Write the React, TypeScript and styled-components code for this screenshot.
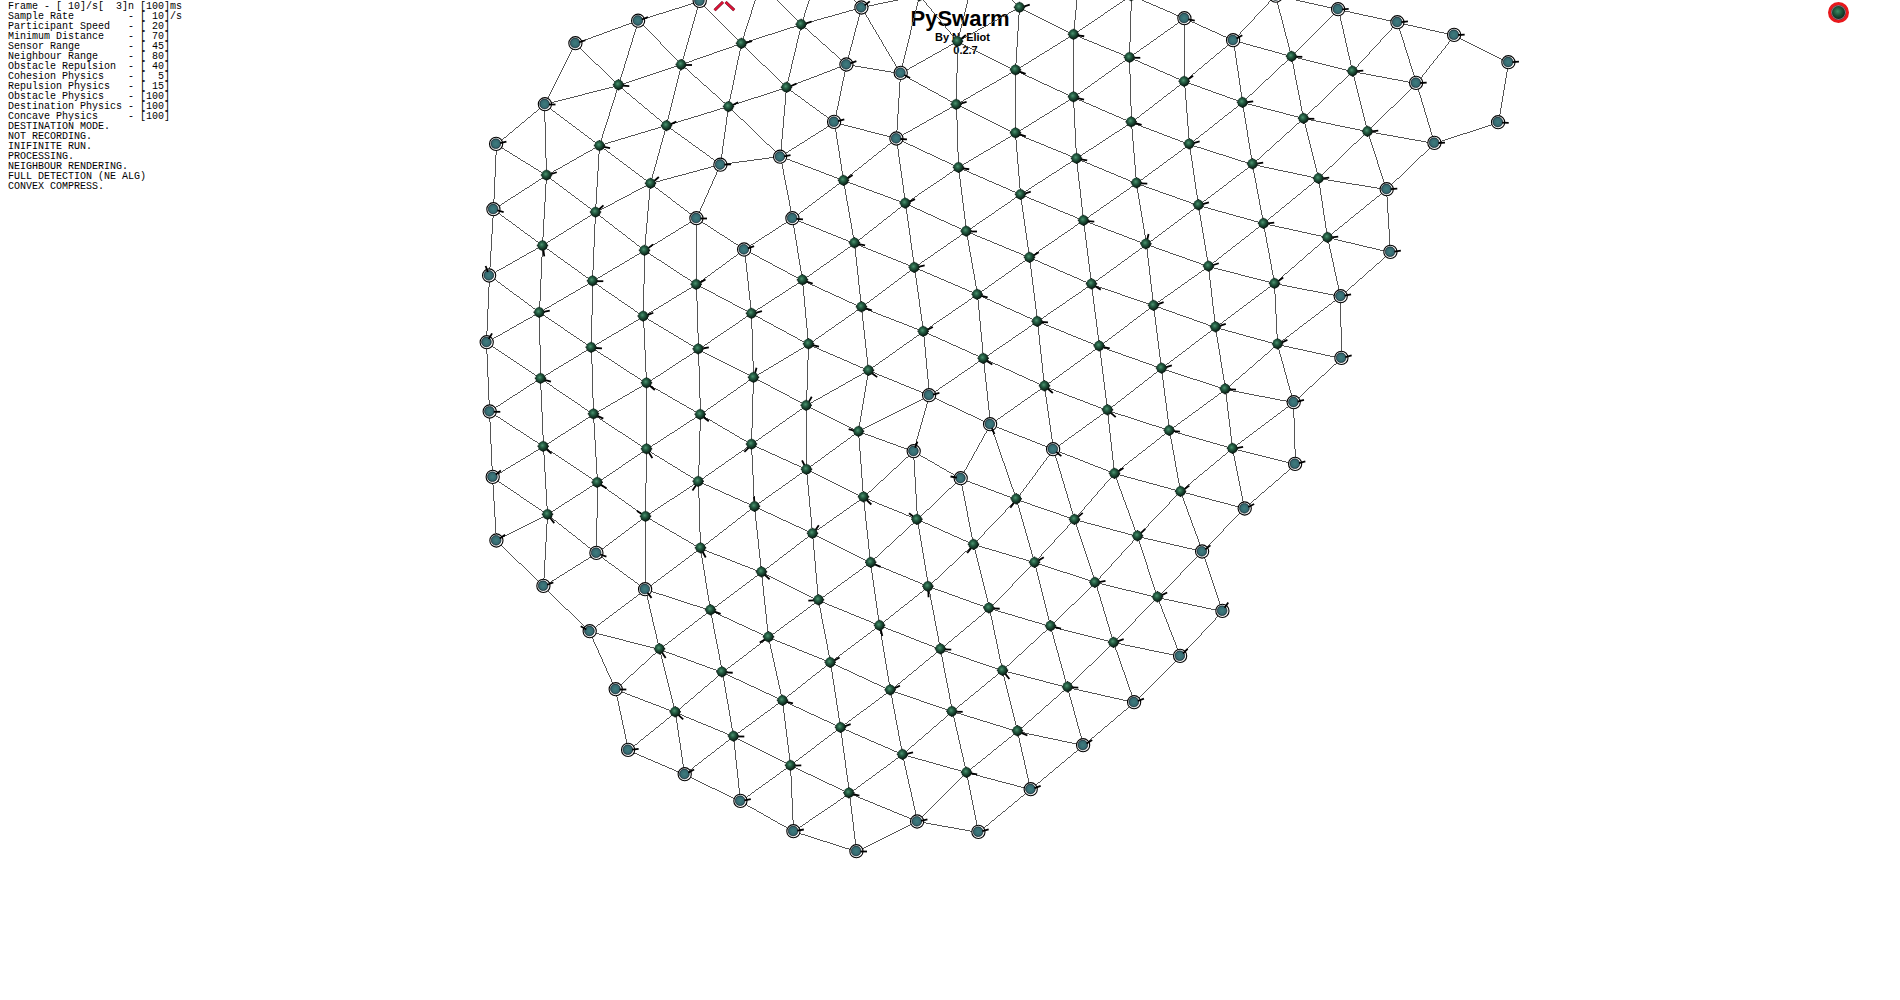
import React from "react";
import styled, { createGlobalStyle } from "styled-components";

const GlobalStyle = createGlobalStyle`
  body {
    margin: 0;
    background: #fff;
    overflow: hidden;
  }
`;

const Stage = styled.main`
  position: relative;
  display: grid;
  grid-template-columns: 1fr auto 1fr;
  align-items: start;
  width: 1900px;
  height: 1000px;
  overflow: hidden;
  background: #fff;
  color: #000;
`;

const Readout = styled.section`
  display: flex;
  flex-direction: column;
  padding: 2px 0 0 8px;
`;

const ReadoutLine = styled.div`
  height: 10px;
  font: 10px/10px "Liberation Mono", monospace;
  white-space: pre;
`;

const Heading = styled.header`
  display: flex;
  flex-direction: column;
  align-items: center;
  padding: 6px 0 0 20px;
  font-family: "Liberation Sans", Arial, sans-serif;
`;

const Title = styled.h1`
  margin: 0;
  font-size: 22px;
  line-height: 25px;
  font-weight: 700;
`;

const Author = styled.div`
  height: 13px;
  padding-left: 5px;
  font-size: 11px;
  line-height: 13px;
  font-weight: 700;
`;

const Version = styled.div`
  padding-left: 11px;
  font-size: 11px;
  line-height: 13px;
  font-weight: 700;
`;

const StatusCorner = styled.div`
  display: flex;
  justify-content: flex-end;
  padding: 2px 51px 0 0;
`;

const RunLamp = styled.div`
  box-sizing: border-box;
  width: 21px;
  height: 21px;
  border: 3px solid #e8181c;
  border-radius: 50%;
  background: radial-gradient(circle at 45% 42%, #3c8a64 0, #1d5238 35%, #06140d 80%);
  box-shadow: inset 0 0 0 1px #8a7480;
`;

const SwarmCanvas = styled.svg`
  position: absolute;
  inset: 0;
  display: block;
`;

const readout = [
  "Frame - [ 10]/s[  3]n [100]ms",
  "Sample Rate         - [ 10]/s",
  "Participant Speed   - [ 20]",
  "Minimum Distance    - [ 70]",
  "Sensor Range        - [ 45]",
  "Neighbour Range     - [ 80]",
  "Obstacle Repulsion  - [ 40]",
  "Cohesion Physics    - [  5]",
  "Repulsion Physics   - [ 15]",
  "Obstacle Physics    - [100]",
  "Destination Physics - [100]",
  "Concave Physics     - [100]",
  "DESTINATION MODE.",
  "NOT RECORDING.",
  "INIFINITE RUN.",
  "PROCESSING.",
  "NEIGHBOUR RENDERING.",
  "FULL DETECTION (NE ALG)",
  "CONVEX COMPRESS.",
];

type Agent = [x: number, y: number, heading: number];

const perimeter: Agent[] = [
  [699.3, 0.7, -150], [637.7, 20.5, -22], [575, 43, -18], [544.5, 104, 0], [495.7, 143.7, -14],
  [720, 164.5, -4], [493, 209, 14], [696, 218, 0], [743.7, 249.3, -20], [861, 7.3, -38],
  [846, 64.3, -20], [900.3, 72.7, 27], [833.7, 121.7, -16], [896, 138.3, 3], [779.7, 156.5, -10],
  [792, 218, 5], [1184, 18, 12], [1232.7, 40, -30], [1275.4, -4.5, 0], [1337.7, 9, -3],
  [1397, 22, -6], [1453.7, 34.7, -3], [1508, 62, -5], [1415.7, 82.7, -3], [1497.7, 122, 2],
  [1434, 142.7, -3], [1386.3, 189, -5], [1390, 251.7, -9], [488.7, 275.3, -110], [486.3, 342, -60],
  [489.3, 411.3, 0], [492.3, 476.7, -40], [496, 540.3, -35], [596, 552.7, 19], [928.7, 395, -14],
  [989.7, 424, 66], [913.3, 451, -70], [1052.7, 449, 39], [960.3, 478, -169], [1340.3, 296, -12],
  [1341, 357.7, -15], [1293.3, 402, -14], [1294.7, 463.7, -15], [1244.3, 508.3, -27], [1201.7, 551.3, -38],
  [543, 585.7, -21], [644.7, 589, 53], [589.3, 631, -150], [615.3, 689, 0], [627.7, 749.7, -7],
  [684.3, 774, -28], [740, 800.7, -11], [793, 831, -11], [856, 851, 0], [1222, 610.7, -57],
  [1179.7, 655.7, -45], [1133.7, 702, -22], [1082.7, 745, -31], [1030.3, 789, -20], [916.7, 821.3, -13],
  [978, 831.7, -15],
];

const interior: Agent[] = [
  [760.2, -16.5, 0], [820, -36, 0], [919.3, -4.5, 0], [976.5, -35, 0], [1081, -44, 0], [1131, -4.5, 0],
  [681, 64.5, 0], [741.3, 43.3, -15], [618.3, 84.7, 5], [728.3, 106.5, -27], [666.3, 125.5, -25],
  [599.3, 145.5, 12], [546.3, 175, -18], [650.3, 183.3, -40], [595.3, 212, -43], [542.3, 245.5, 82],
  [644.3, 250.3, -38], [801, 24.3, -17], [957.3, 41.3, -40], [786.3, 87.3, -23], [956, 104.3, -16],
  [958.3, 167.3, 8], [843.3, 180.3, -33], [905, 203, -25], [854.3, 242.7, 12], [966, 231, 0],
  [1019.3, 7.3, -18], [1073.3, 34.3, 8], [1129.3, 57.3, 0], [1015.3, 69.7, 20], [1073.3, 96.7, 13],
  [1184, 81.3, -35], [1242.3, 102.3, -8], [1015.3, 132.7, 17], [1131, 121.7, 15], [1076.3, 158.3, 9],
  [1189, 143.7, -15], [1252.3, 163.7, -9], [1020.3, 194.3, -18], [1136.3, 182.7, 2], [1083.3, 220.3, 4],
  [1198.3, 204.7, -15], [1145.7, 243.7, -77], [1263.3, 223.3, -7], [1029.3, 257.3, -32], [1291.3, 56.3, 0],
  [1352.3, 71, -5], [1303.3, 118.3, 0], [1367.3, 131.3, -6], [1318.3, 178.3, -7], [1327.3, 237.3, -7],
  [592.3, 280.7, 0], [696, 284.3, -31], [539, 312.3, -12], [643, 316, -21], [751.3, 313.3, -15],
  [591, 347.3, 3], [698, 348.7, -10], [540.3, 378.3, 15], [646.3, 382.7, 40], [753.3, 377.3, -75],
  [593.3, 413.7, 25], [700, 414.3, 38], [543, 446.3, 40], [646.3, 448.7, 58], [751.3, 444, 135],
  [597, 482.3, 31], [698, 481.3, 125], [547.3, 514.3, 52], [645.3, 516.3, -146], [754.3, 506.3, -95],
  [700.3, 547.7, 62], [761.3, 571.7, 42], [802.3, 279.7, 19], [914, 267.3, -14], [861.3, 306.7, 17],
  [977, 294.3, 14], [1091.3, 283.7, 31], [808.3, 343.7, 14], [923, 331.3, -27], [1037, 321.3, 3],
  [868.3, 370.3, 37], [983, 358.3, 33], [1099, 345.7, 12], [1044.3, 385.7, 40], [806, 405.3, -60],
  [858.3, 431.3, -165], [806.3, 469.3, -117], [863.3, 496.7, 44], [1016, 498.7, 126], [916.7, 519.3, -141],
  [1074.3, 519.3, -41], [812.3, 533.3, -55], [973.3, 544.3, 129], [870.5, 562.3, 23], [1034.3, 562.2, -31],
  [1208.3, 266, -18], [1274.3, 283.3, -37], [1153.3, 305.3, -21], [1215.3, 326.7, -18], [1277.3, 343.7, -24],
  [1161.3, 368, -17], [1225, 388.7, 2], [1107.3, 409.7, 41], [1169, 430.3, 4], [1232.3, 448.3, -11],
  [1114.3, 473.3, -34], [1180.3, 491.3, -36], [1137.3, 535.7, -45], [818.3, 599.7, 178], [710.3, 609.7, 20],
  [768.3, 636.7, 150], [659.3, 648.7, 56], [830, 662.3, -30], [721.7, 671.7, 3], [782.3, 700.3, 14],
  [675, 711.7, 43], [840.3, 727.3, -20], [733.3, 736, 0], [790.3, 765.3, -2], [848.7, 792.7, 14],
  [927.7, 586.3, 88], [1094.7, 582.3, -11], [988.7, 607.7, 3], [1157.3, 596.7, -27], [879.3, 625.3, 76],
  [1050.3, 625.7, 13], [1113.3, 642.3, -20], [940.3, 648.7, 2], [1002.3, 670.3, 51], [1067.3, 686.7, 2],
  [890, 689.7, -26], [951.7, 711.3, 0], [1017.3, 730.7, 24], [902.3, 754.3, -13], [966.3, 772.3, 9],
];

const NEIGHBOUR_RANGE = 80;
const agents = [...perimeter, ...interior];

const isBrokenLink = (a: Agent, b: Agent) =>
  (a[0] === 596 && b[0] === 589.3) || (a[0] === 589.3 && b[0] === 596);

const links = agents.flatMap((a, i) =>
  agents
    .slice(i + 1)
    .filter((b) => Math.hypot(a[0] - b[0], a[1] - b[1]) < NEIGHBOUR_RANGE && !isBrokenLink(a, b))
    .map((b) => [a, b] as const)
);

/* A link is a stair of one-pixel steps along its longer axis. */
const steppedLine = (a: Agent, b: Agent) => {
  const x0 = Math.floor(a[0] + 0.4);
  const y0 = Math.floor(a[1] + 0.4);
  const dx = Math.floor(b[0] + 0.4) - x0;
  const dy = Math.floor(b[1] + 0.4) - y0;
  const steps = Math.max(Math.abs(dx), Math.abs(dy));
  let d = "";
  for (let i = 0; i <= steps; i++) {
    const x = Math.round(x0 + (dx * i) / steps);
    const y = Math.round(y0 + (dy * i) / steps);
    d += `M${x} ${y}h1v1h-1z`;
  }
  return d;
};

const Whisker = ({ agent: [x, y, heading] }: { agent: Agent }) => {
  const r = (heading * Math.PI) / 180;
  const c = Math.cos(r);
  const s = Math.sin(r);
  return (
    <line
      x1={x + 0.5 + c * 4}
      y1={y + 0.5 + s * 4}
      x2={x + 0.5 + c * 10.5}
      y2={y + 0.5 + s * 10.5}
      stroke="#000"
      strokeWidth={1.8}
    />
  );
};

const EdgeAgent = ({ agent }: { agent: Agent }) => (
  <g>
    <circle cx={agent[0] + 0.4} cy={agent[1] + 0.2} r={6.6} fill="#fff" stroke="#000" strokeWidth={1.1} />
    <circle cx={agent[0] + 0.1} cy={agent[1]} r={4.9} fill="url(#edgeBody)" stroke="#182b30" strokeWidth={0.7} />
    <Whisker agent={agent} />
  </g>
);

const CoreAgent = ({ agent }: { agent: Agent }) => (
  <g>
    <Whisker agent={agent} />
    <path
      d={`M${agent[0] - 5.5} ${agent[1]}H${agent[0] + 5.9}M${agent[0] + 0.2} ${agent[1] - 5.6}V${agent[1] + 5.8}`}
      stroke="#222"
      strokeWidth={1.4}
    />
    <circle cx={agent[0] + 0.2} cy={agent[1] + 0.1} r={5.1} fill="url(#coreBody)" />
  </g>
);

export default function App() {
  return (
    <>
      <GlobalStyle />
      <Stage>
        <Readout>
          {readout.map((line) => (
            <ReadoutLine key={line}>{line}</ReadoutLine>
          ))}
        </Readout>
        <Heading>
          <Title>PySwarm</Title>
          <Author>By N. Eliot</Author>
          <Version>0.2.7</Version>
        </Heading>
        <StatusCorner>
          <RunLamp />
        </StatusCorner>
        <SwarmCanvas width="1900" height="1000" viewBox="0 0 1900 1000">
          <defs>
            <radialGradient id="coreBody" cx="0.42" cy="0.4" r="0.6">
              <stop offset="0" stopColor="#4c9470" />
              <stop offset="0.4" stopColor="#245c42" />
              <stop offset="1" stopColor="#07150e" />
            </radialGradient>
            <radialGradient id="edgeBody" cx="0.5" cy="0.5" r="0.55">
              <stop offset="0" stopColor="#3f7d7e" />
              <stop offset="0.65" stopColor="#356b72" />
              <stop offset="1" stopColor="#28474f" />
            </radialGradient>
          </defs>
          <g fill="#555" shapeRendering="crispEdges">
            {links.map(([a, b], i) => (
              <path key={i} d={steppedLine(a, b)} />
            ))}
          </g>
          <g stroke="#5a1020" strokeWidth={3}>
            <path d="M714.6 10.2L723 2M725.6 2L734.2 10.2" />
            <path d="M714.6 10.2L723 2M725.6 2L734.2 10.2" stroke="#dc1438" strokeWidth={2.2} />
          </g>
          {interior.map((agent) => (
            <CoreAgent key={agent.join()} agent={agent} />
          ))}
          {perimeter.map((agent) => (
            <EdgeAgent key={agent.join()} agent={agent} />
          ))}
        </SwarmCanvas>
      </Stage>
    </>
  );
}
